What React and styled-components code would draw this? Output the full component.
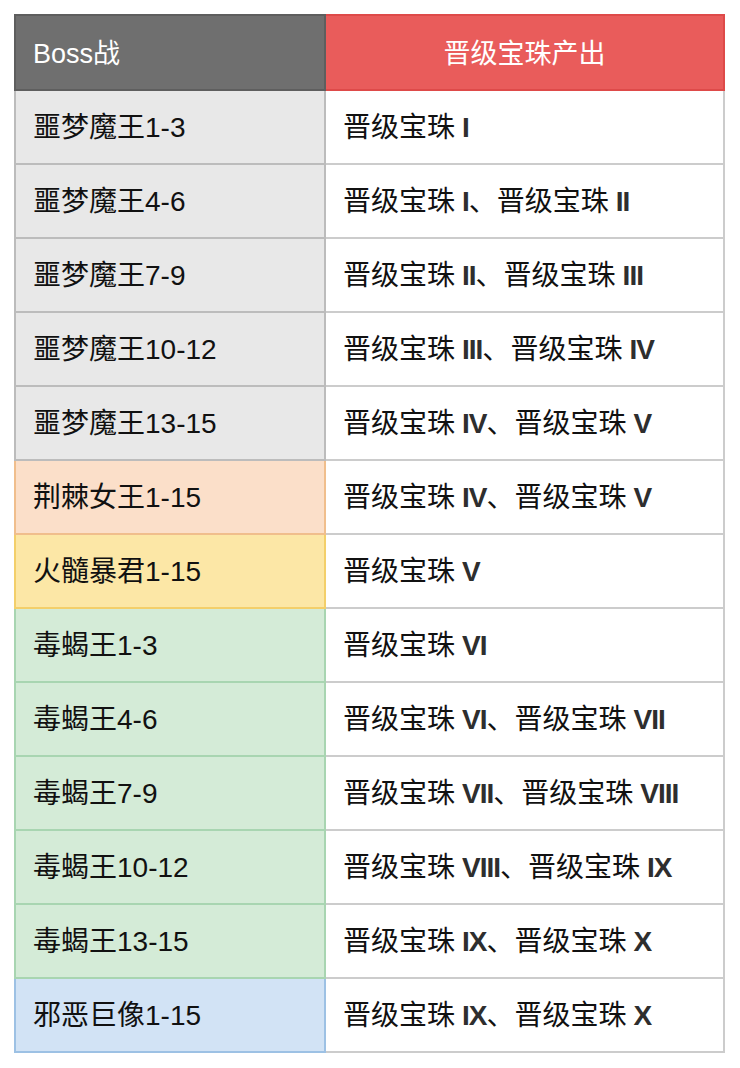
import React from "react";
import styled, { createGlobalStyle } from "styled-components";

const GlobalStyle = createGlobalStyle`
  html, body {
    margin: 0;
    padding: 0;
    background: #ffffff;
  }
  body {
    font-family: "Liberation Sans", "Noto Sans CJK SC", sans-serif;
    color: #111;
  }
`;

// colour per boss group: cell background and its border
const groups = {
  nightmare: { bg: "#e8e8e8", border: "#bcbcbc" },
  thorn: { bg: "#fbdfc9", border: "#f0be8c" },
  fire: { bg: "#fce7a6", border: "#f3cf6a" },
  scorpion: { bg: "#d4ebd7", border: "#a8d5b1" },
  colossus: { bg: "#d2e3f5", border: "#9dc1e4" },
};

const rows = [
  { boss: "噩梦魔王1-3", group: "nightmare", drops: ["I"] },
  { boss: "噩梦魔王4-6", group: "nightmare", drops: ["I", "II"] },
  { boss: "噩梦魔王7-9", group: "nightmare", drops: ["II", "III"] },
  { boss: "噩梦魔王10-12", group: "nightmare", drops: ["III", "IV"] },
  { boss: "噩梦魔王13-15", group: "nightmare", drops: ["IV", "V"] },
  { boss: "荆棘女王1-15", group: "thorn", drops: ["IV", "V"] },
  { boss: "火髓暴君1-15", group: "fire", drops: ["V"] },
  { boss: "毒蝎王1-3", group: "scorpion", drops: ["VI"] },
  { boss: "毒蝎王4-6", group: "scorpion", drops: ["VI", "VII"] },
  { boss: "毒蝎王7-9", group: "scorpion", drops: ["VII", "VIII"] },
  { boss: "毒蝎王10-12", group: "scorpion", drops: ["VIII", "IX"] },
  { boss: "毒蝎王13-15", group: "scorpion", drops: ["IX", "X"] },
  { boss: "邪恶巨像1-15", group: "colossus", drops: ["IX", "X"] },
];

const Page = styled.div`
  padding: 14px 15px 14px 14px;
`;

const Table = styled.table`
  width: 711px;
  border-collapse: collapse;
  table-layout: fixed;
  font-size: 28px;
`;

const HeadCell = styled.th`
  height: 71px;
  padding: 0 17px 2px;
  font-weight: 400;
  font-size: 27px;
  color: #ffffff;
  text-align: ${(p) => p.$align || "left"};
  background: ${(p) => p.$bg};
  border: 2px solid ${(p) => p.$border};
  width: ${(p) => p.$width || "auto"};
`;

const BossCell = styled.td`
  height: 67px;
  padding: 0 17px 5px;
  background: ${(p) => p.$bg};
  border: 2px solid ${(p) => p.$border};
  white-space: nowrap;
`;

const DropCell = styled.td`
  height: 67px;
  padding: 0 17px 5px;
  background: #ffffff;
  border: 2px solid #cccccc;
  white-space: nowrap;
`;

const Numeral = styled.span`
  color: #2e2e2e;
  font-weight: 700;
  letter-spacing: -1px;
  margin-left: 7px;
`;

const Gem = ({ level }) => (
  <>
    晋级宝珠<Numeral>{level}</Numeral>
  </>
);

export default function App() {
  return (
    <Page>
      <GlobalStyle />
      <Table>
        <thead>
          <tr>
            <HeadCell $bg="#6f6f6f" $border="#5e5e5e" $width="274px">
              Boss战
            </HeadCell>
            <HeadCell $bg="#e95c5b" $border="#de4a49" $align="center">
              晋级宝珠产出
            </HeadCell>
          </tr>
        </thead>
        <tbody>
          {rows.map((r) => {
            const g = groups[r.group];
            return (
              <tr key={r.boss}>
                <BossCell $bg={g.bg} $border={g.border}>
                  {r.boss}
                </BossCell>
                <DropCell>
                  {r.drops.map((d, i) => (
                    <React.Fragment key={d}>
                      {i > 0 && "、"}
                      <Gem level={d} />
                    </React.Fragment>
                  ))}
                </DropCell>
              </tr>
            );
          })}
        </tbody>
      </Table>
    </Page>
  );
}
